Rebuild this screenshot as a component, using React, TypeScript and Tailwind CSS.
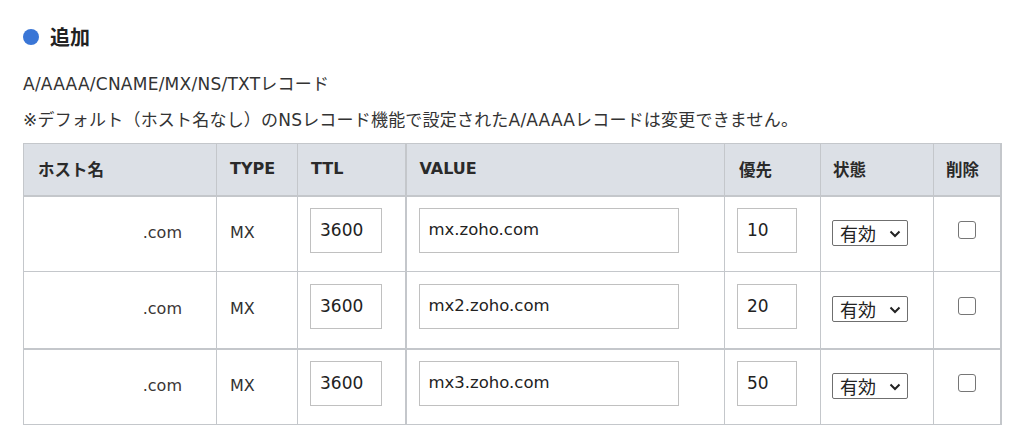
import React from 'react'

const rows = [
  { ttl: '3600', value: 'mx.zoho.com', pri: '10' },
  { ttl: '3600', value: 'mx2.zoho.com', pri: '20' },
  { ttl: '3600', value: 'mx3.zoho.com', pri: '50' },
]

const font = "font-['DejaVu_Sans','Noto_Sans_CJK_JP',sans-serif]"
const cjk = "font-['Noto_Sans_CJK_JP',sans-serif]"

const Select = () => (
  <div className="inline-flex h-[26px] w-[76px] items-center justify-between rounded-[2px] border border-[#6f6f6f] bg-white pl-[7px] pr-[6px] text-[18px] leading-none text-[#222]">
    <span className={cjk}>有効</span>
    <svg width="12" height="8" viewBox="0 0 12 8" fill="none" className="mt-[2px]">
      <path d="M1.5 1.5 6 6l4.5-4.5" stroke="#222" strokeWidth="2" />
    </svg>
  </div>
)

const App = () => {
  return (
    <div className={`h-[444px] w-[1011px] bg-white pl-[23px] text-[#333] ${font}`}>
      <div className="flex h-[51px] items-end">
        <div className="flex h-[28px] items-center gap-[11px]">
          <span className="h-4 w-4 rounded-full bg-[#3a76d6]"></span>
          <h2 className={`${cjk} text-[20px] font-bold text-[#222]`}>追加</h2>
        </div>
      </div>

      <p className="mt-[21px] text-[17px] leading-6 tracking-[0.25px]">A/AAAA/CNAME/MX/NS/TXTレコード</p>
      <p className="mt-[12px] text-[17px] leading-6 tracking-[0.2px]">
        ※デフォルト（ホスト名なし）のNSレコード機能で設定されたA/AAAAレコードは変更できません。
      </p>

      <table className="mt-[11px] w-[977px] table-fixed border-collapse text-[16px]">
        <colgroup>
          <col className="w-[193px]" />
          <col className="w-[81px]" />
          <col className="w-[108px]" />
          <col className="w-[319px]" />
          <col className="w-[96px]" />
          <col className="w-[113px]" />
          <col className="w-[67px]" />
        </colgroup>
        <thead>
          <tr className="h-[52px] bg-[#dce0e6] text-left font-bold text-[#2a2a2a]">
            <th className={`border border-b-2 border-[#c4c7cb] pl-[14px] text-[16.5px] ${cjk}`}>ホスト名</th>
            <th className="border border-b-2 border-[#c4c7cb] pl-[13px]">TYPE</th>
            <th className="border border-b-2 border-r-2 border-[#c4c7cb] pl-[13px]">TTL</th>
            <th className="border border-b-2 border-[#c4c7cb] pl-[13px]">VALUE</th>
            <th className={`border border-b-2 border-[#c4c7cb] pl-[14px] text-[16.5px] ${cjk}`}>優先</th>
            <th className={`border border-b-2 border-[#c4c7cb] pl-[12px] text-[16.5px] ${cjk}`}>状態</th>
            <th className={`border border-b-2 border-r-2 border-[#c4c7cb] pl-[12px] text-[16.5px] ${cjk}`}>削除</th>
          </tr>
        </thead>
        <tbody>
          {rows.map((r, i) => (
            <tr key={i} className={i === 1 ? 'h-[77px] border-b-2 border-[#c4c7cb]' : 'h-[76px]'}>
              <td className="border border-[#c4c7cb] pr-[34px] pb-[2px] text-right align-middle text-[#3a3535]">.com</td>
              <td className="border border-[#c4c7cb] pl-[13px] pb-[2px] align-middle">MX</td>
              <td className="border border-r-2 border-[#c4c7cb] pl-[12px] pb-[6px] align-middle">
                <div className="flex h-[45px] w-[72px] items-center border border-[#c0c0c0] pl-[9px] text-[17px] text-[#222]">
                  {r.ttl}
                </div>
              </td>
              <td className="border border-[#c4c7cb] pl-[12px] pb-[6px] align-middle">
                <div className="flex h-[45px] w-[260px] items-center border border-[#c0c0c0] pl-[9px] text-[16.5px] text-[#222]">
                  {r.value}
                </div>
              </td>
              <td className="border border-[#c4c7cb] pl-[12px] pb-[6px] align-middle">
                <div className="flex h-[45px] w-[60px] items-center border border-[#c0c0c0] pl-[9px] text-[17px] text-[#222]">
                  {r.pri}
                </div>
              </td>
              <td className="border border-[#c4c7cb] pl-[11px] align-middle">
                <Select />
              </td>
              <td className="border border-r-2 border-[#c4c7cb] pb-[8px] text-center align-middle">
                <span className="inline-block h-[18px] w-[18px] rounded-[3px] border-[1.5px] border-[#767676] bg-white align-middle"></span>
              </td>
            </tr>
          ))}
        </tbody>
      </table>
    </div>
  )
}

export default App
